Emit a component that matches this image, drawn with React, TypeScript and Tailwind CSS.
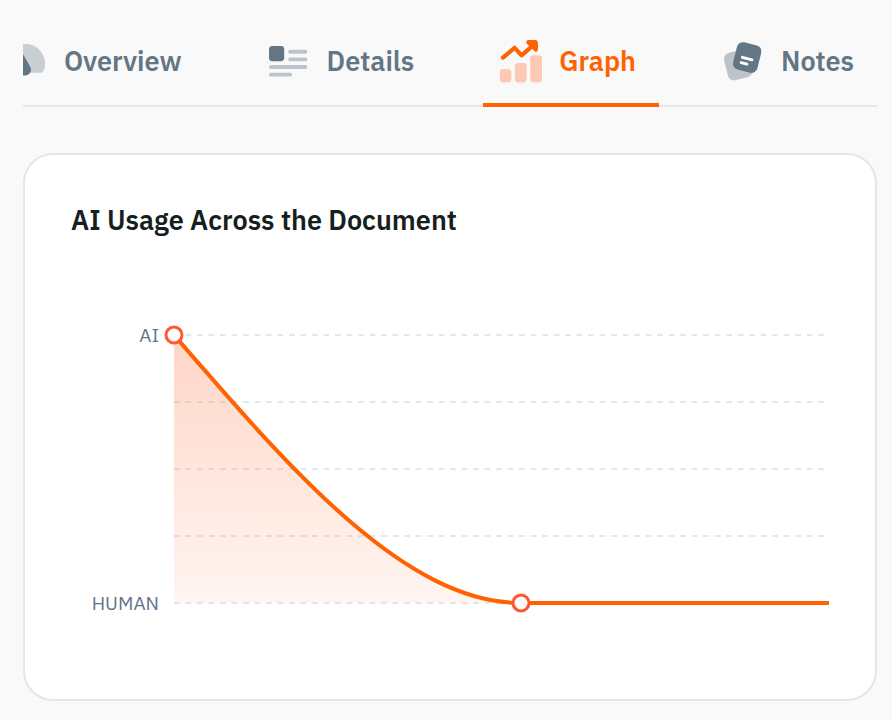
import { useState } from 'react';
import type { ReactNode } from 'react';
import clsx from 'clsx';

function OverviewIcon() {
  return (
    <svg viewBox="0 0 44 44" className="h-11 w-11 shrink-0" aria-hidden="true">
      <path
        d="M21.7 4A19.3 19.3 0 0 0 2.4 23.3C2.4 26 2.8 28.4 3.7 30.6C4.3 32 5.2 32.8 6.6 32.8H36.8C38.2 32.8 39.1 32 39.7 30.6C40.6 28.4 41 26 41 23.3A19.3 19.3 0 0 0 21.7 4Z"
        fill="#c9ced3"
      />
      <path
        d="M14 9.4C14.8 9 15.8 9.2 16.4 10.1Q21.4 17.6 26 26.4A5.6 5.6 0 1 1 16.2 33L13.2 11.4C13 10.5 13.3 9.7 14 9.4Z"
        fill="#637684"
      />
    </svg>
  );
}

function DetailsIcon() {
  return (
    <svg viewBox="0 0 44 44" className="h-11 w-11 shrink-0" aria-hidden="true">
      <rect x="2" y="6" width="15.2" height="15.2" rx="3.4" fill="#637684" />
      <g fill="#bcc3ca">
        <rect x="21.3" y="9.8" width="19" height="3.9" rx="1.9" />
        <rect x="21.3" y="17.4" width="19" height="3.9" rx="1.9" />
        <rect x="2" y="25" width="38.3" height="3.9" rx="1.9" />
        <rect x="2" y="32.7" width="23" height="3.9" rx="1.9" />
      </g>
    </svg>
  );
}

function GraphIcon() {
  return (
    <svg viewBox="0 0 44 44" className="h-11 w-11 shrink-0" aria-hidden="true">
      <g fill="#fdc9b5">
        <rect x="0.8" y="29" width="11.6" height="13.4" rx="3.4" />
        <rect x="15.9" y="23" width="11.8" height="19.4" rx="3.4" />
        <rect x="31.2" y="15.2" width="11.8" height="27.2" rx="3.4" />
      </g>
      <path
        d="M4 17.6L15.6 7.8L22.6 15.4L34 5.4"
        fill="none"
        stroke="#ff6200"
        strokeWidth="4.2"
        strokeLinecap="round"
        strokeLinejoin="round"
      />
      <path
        d="M29.4 2.2L35.6 2Q37 2 37 3.4L36.8 9.6Z"
        fill="#ff6200"
        stroke="#ff6200"
        strokeWidth="4.2"
        strokeLinejoin="round"
      />
    </svg>
  );
}

function NotesIcon() {
  return (
    <svg viewBox="0 0 44 44" className="h-11 w-11 shrink-0" aria-hidden="true">
      <rect x="4.7" y="11" width="25" height="28" rx="6" fill="#bcc3ca" transform="rotate(-14 17.2 25)" />
      <rect x="13.7" y="3.5" width="25" height="28" rx="6" fill="#637684" transform="rotate(14 26.2 17.5)" />
      <path d="M21.3 17.3L31 19.9M20.1 22.6L25.9 24.2" fill="none" stroke="#fff" strokeWidth="2.8" strokeLinecap="round" />
    </svg>
  );
}

const tabs: { id: string; label: string; icon: ReactNode }[] = [
  { id: 'overview', label: 'Overview', icon: <OverviewIcon /> },
  { id: 'details', label: 'Details', icon: <DetailsIcon /> },
  { id: 'graph', label: 'Graph', icon: <GraphIcon /> },
  { id: 'notes', label: 'Notes', icon: <NotesIcon /> },
];

const gridLines = [50, 117, 184, 251, 318];

function UsageChart() {
  return (
    <svg viewBox="0 0 758 368" className="mt-[46px] block w-full" role="img" aria-label="AI usage across the document">
      <defs>
        <linearGradient id="usage-fill" x1="0" y1="0" x2="0" y2="1">
          <stop offset="0" stopColor="#ff5a1f" stopOpacity="0.25" />
          <stop offset="1" stopColor="#ff5a1f" stopOpacity="0.06" />
        </linearGradient>
      </defs>

      {gridLines.map((y) => (
        <line
          key={y}
          x1="103"
          x2="753"
          y1={y}
          y2={y}
          pathLength={339}
          stroke="#e2e8f0"
          strokeWidth="2"
          strokeDasharray="3 3"
        />
      ))}

      <g className="fill-[#64748b] text-[19px]" textAnchor="end">
        <text x="88" y="57">AI</text>
        <text x="88" y="325">HUMAN</text>
      </g>

      <path d="M103 50C219 184 334 318 450 318H103Z" fill="url(#usage-fill)" />
      <path d="M103 50C219 184 334 318 450 318H758" fill="none" stroke="#ff6200" strokeWidth="4" />

      <g fill="#fff" stroke="#ff5733" strokeWidth="3">
        <circle cx="103" cy="50" r="8" />
        <circle cx="450" cy="318" r="8" />
      </g>
    </svg>
  );
}

export default function App() {
  const [active, setActive] = useState('graph');

  return (
    <div className="min-h-screen bg-[#f9f9f9] pr-[15px] pb-5 pl-[23px] font-['IBM_Plex_Sans','Noto_Sans',sans-serif]">
      {/* Tabs */}
      <div
        role="tablist"
        className="flex justify-end gap-[46px] overflow-hidden shadow-[inset_0_-2px_0_#e6e6e6]"
      >
        {tabs.map((tab) => (
          <button
            key={tab.id}
            type="button"
            role="tab"
            aria-selected={active === tab.id}
            onClick={() => setActive(tab.id)}
            className={clsx(
              'flex shrink-0 items-start gap-4 border-b-4 pt-10 pr-[23px] pb-[19px] pl-4 text-[27px] leading-[42px] font-semibold',
              active === tab.id
                ? 'border-[#ff6200] text-[#ff6200]'
                : 'border-transparent text-[#637684]'
            )}
          >
            {tab.icon}
            {tab.label}
          </button>
        ))}
      </div>

      {/* Chart card */}
      <section className="mt-[46px] rounded-[30px] border-2 border-[#e6e6ea] bg-white p-[46px]">
        <h2 className="text-[27px] leading-[38px] font-semibold text-[#15201e]">
          AI Usage Across the Document
        </h2>
        <UsageChart />
      </section>
    </div>
  );
}
